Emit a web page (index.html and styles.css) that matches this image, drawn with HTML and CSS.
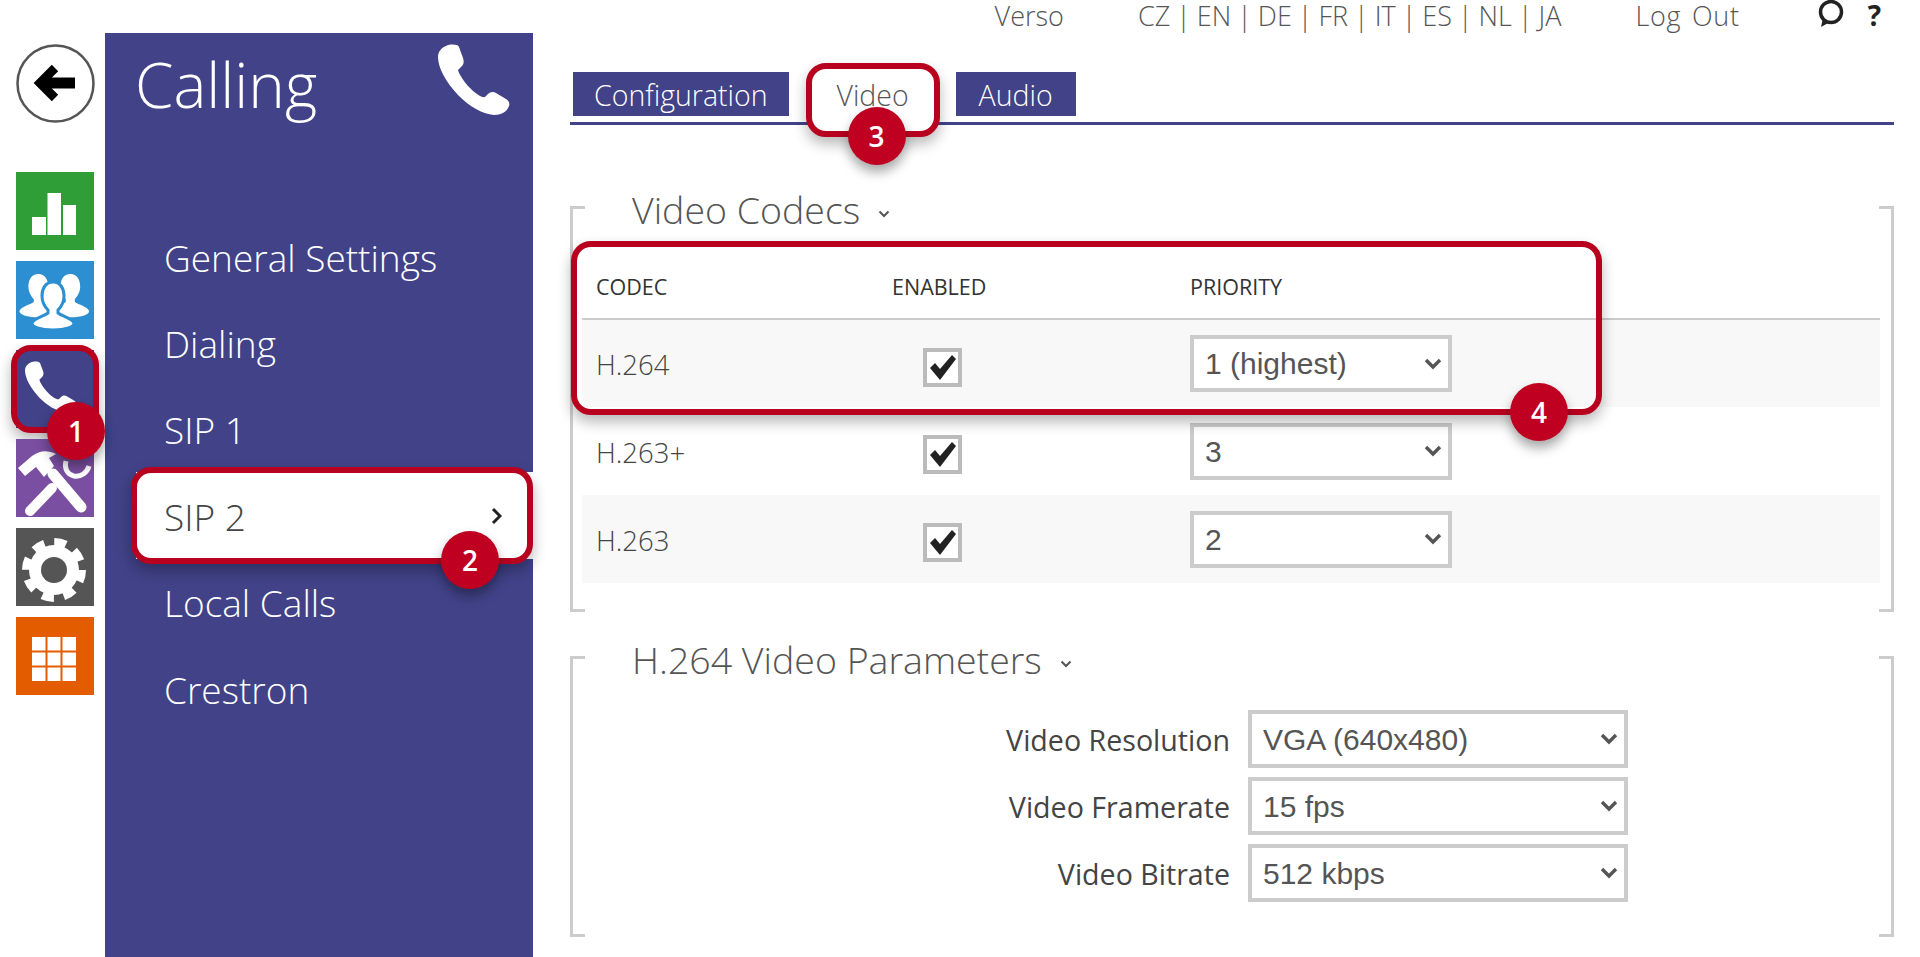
FILE: index.html
```html
<!DOCTYPE html>
<html>
<head>
    <meta charset="UTF-8">
    <title>Calling</title>
    <link rel="stylesheet" href="styles.css">
</head>
<body>
  <div class="page">
    <div class="rail">
      <svg class="back" viewBox="0 0 79 79">
        <circle cx="39.5" cy="39.5" r="38" fill="#fff" stroke="#555" stroke-width="2.5"/>
        <path d="M39 24 L24 39 L39 54" fill="none" stroke="#000" stroke-width="9"/>
        <path d="M28 39 H59" fill="none" stroke="#000" stroke-width="11"/>
      </svg>
      <div class="rail_icons">
        <div class="tile green">
          <svg viewBox="0 0 78 78" fill="#fff">
            <rect x="16" y="45" width="14" height="18"/>
            <rect x="31.5" y="21" width="13.5" height="42"/>
            <rect x="47" y="33" width="13" height="30"/>
          </svg>
        </div>
        <div class="tile blue">
          <svg viewBox="0 0 78 78" fill="#fff">
            <path transform="translate(-11 -5) scale(.9)" d="M37 20 c-7 0 -11 6 -11 14 c0 6 3 11 6 14 l0 3 c-4 3 -14 5 -16 10 c0 4 8 7 21 7 s21 -3 21 -7 c-2 -5 -12 -7 -16 -10 l0 -3 c3 -3 6 -8 6 -14 c0 -8 -4 -14 -11 -14 z"/>
            <path transform="translate(21 -5) scale(.9)" d="M37 20 c-7 0 -11 6 -11 14 c0 6 3 11 6 14 l0 3 c-4 3 -14 5 -16 10 c0 4 8 7 21 7 s21 -3 21 -7 c-2 -5 -12 -7 -16 -10 l0 -3 c3 -3 6 -8 6 -14 c0 -8 -4 -14 -11 -14 z"/>
            <path transform="translate(0 1)" stroke="#2c8fd1" stroke-width="3" d="M37 20 c-7 0 -11 6 -11 14 c0 6 3 11 6 14 l0 3 c-4 3 -14 5 -16 10 c0 4 8 7 21 7 s21 -3 21 -7 c-2 -5 -12 -7 -16 -10 l0 -3 c3 -3 6 -8 6 -14 c0 -8 -4 -14 -11 -14 z"/>
          </svg>
        </div>
        <div class="tile indigo">
          <svg viewBox="0 0 78 78" fill="#fff">
            <path transform="translate(9 11) scale(.72)" d="M8 2 C3 4 0 8 0 13 C0 24 8 38 20 51 C31 62 44 70 56 71 C63 71 69 68 71 62 C72 59 71 57 68 55 L58 49 C55 47 52 48 50 50 L47 53 C44 54 38 50 32 44 C26 38 21 30 20 26 L24 22 C26 20 26 17 25 14 L21 3 C20 0 12 0 8 2 Z"/>
          </svg>
          <div class="callout"></div>
          <div class="badge badge_one">1</div>
        </div>
        <div class="tile violet">
          <svg viewBox="0 0 78 78" fill="none" stroke="#fff">
            <path d="M37 35 L65 68" stroke-width="11" stroke-linecap="round"/>
            <path d="M14 72 L36 49" stroke-width="10" stroke-linecap="round"/>
            <path d="M2 29 L16 17 C24 11 32 11 40 15 L33 19 L38 27 L28 38 L20 28 L9 37 Z" fill="#fff" stroke="none"/>
            <path d="M50 22 C48 30 52 36 58 37 C65 38 71 34 73 27" stroke-width="5"/>
          </svg>
        </div>
        <div class="tile grey">
          <svg viewBox="0 0 78 78">
            <circle cx="38" cy="42" r="25" fill="#fff"/>
            <circle cx="38" cy="42" r="28" fill="none" stroke="#fff" stroke-width="8" stroke-dasharray="12 10"/>
            <circle cx="38" cy="42" r="13" fill="#555"/>
          </svg>
        </div>
        <div class="tile orange">
          <svg viewBox="0 0 78 78">
            <rect x="16" y="20" width="44" height="44" fill="#fff"/>
            <path d="M30.5 20 V64 M45.5 20 V64 M16 34.5 H60 M16 49.5 H60" stroke="#e35d00" stroke-width="2"/>
          </svg>
        </div>
      </div>
    </div>

    <div class="nav">
      <div class="nav_head">
        <div class="nav_title">Calling</div>
        <svg class="nav_phone" viewBox="0 0 72 72" fill="#fff">
          <path d="M8 2 C3 4 0 8 0 13 C0 24 8 38 20 51 C31 62 44 70 56 71 C63 71 69 68 71 62 C72 59 71 57 68 55 L58 49 C55 47 52 48 50 50 L47 53 C44 54 38 50 32 44 C26 38 21 30 20 26 L24 22 C26 20 26 17 25 14 L21 3 C20 0 12 0 8 2 Z"/>
        </svg>
      </div>
      <div class="nav_item">General Settings</div>
      <div class="nav_item">Dialing</div>
      <div class="nav_item">SIP 1</div>
      <div class="nav_item active">
        SIP 2
        <svg class="nav_arrow" viewBox="0 0 11 18"><path d="M2 2 L9 9 L2 16" fill="none" stroke="#222" stroke-width="3"/></svg>
        <div class="callout"></div>
        <div class="badge badge_two">2</div>
      </div>
      <div class="nav_item">Local Calls</div>
      <div class="nav_item">Crestron</div>
    </div>

    <div class="main">
      <div class="topbar">
        <span>Verso</span>
        <span class="langs">CZ | EN | DE | FR | IT | ES | NL | JA</span>
        <span class="logout">Log Out</span>
        <svg class="bubble" viewBox="0 0 26 28"><circle cx="13" cy="12" r="10.5" fill="none" stroke="#222" stroke-width="3.5"/><path d="M5 18 L3 27 L12 22 Z" fill="#222"/></svg>
        <span class="help">?</span>
      </div>

      <div class="tabs">
        <div class="tab">Configuration</div>
        <div class="tab video">
          <div class="callout"></div>
          <span class="tab_text">Video</span>
          <div class="badge badge_three">3</div>
        </div>
        <div class="tab audio">Audio</div>
      </div>

      <div class="section codecs">
        <h2>Video Codecs <svg class="caret" viewBox="0 0 12 8"><path d="M1.5 1.5 L6 6 L10.5 1.5" fill="none" stroke="#555" stroke-width="2"/></svg></h2>
        <table>
          <thead>
            <tr><th class="c1">CODEC</th><th class="c2">ENABLED</th><th class="c3">PRIORITY</th><th></th></tr>
          </thead>
          <tbody>
            <tr class="odd">
              <td class="c1">H.264</td>
              <td class="c2"><input type="checkbox" checked></td>
              <td class="c3"><select><option>1 (highest)</option></select></td>
              <td></td>
            </tr>
            <tr>
              <td class="c1">H.263+</td>
              <td class="c2"><input type="checkbox" checked></td>
              <td class="c3"><select><option>3</option></select></td>
              <td></td>
            </tr>
            <tr class="odd">
              <td class="c1">H.263</td>
              <td class="c2"><input type="checkbox" checked></td>
              <td class="c3"><select><option>2</option></select></td>
              <td></td>
            </tr>
          </tbody>
        </table>
        <div class="callout table_callout">
          <div class="badge badge_four">4</div>
        </div>
      </div>

      <div class="section params">
        <h2>H.264 Video Parameters <svg class="caret" viewBox="0 0 12 8"><path d="M1.5 1.5 L6 6 L10.5 1.5" fill="none" stroke="#555" stroke-width="2"/></svg></h2>
        <div class="param_grid">
          <label>Video Resolution</label>
          <select><option>VGA (640x480)</option></select>
          <label>Video Framerate</label>
          <select><option>15 fps</option></select>
          <label>Video Bitrate</label>
          <select><option>512 kbps</option></select>
        </div>
      </div>
    </div>
  </div>
</body>
</html>
```
FILE: styles.css
```css
* {
  box-sizing: border-box;
}
html, body {
  margin: 0;
  height: 100%;
  background: #fff;
}
body {
  font-family: "Open Sans", "Liberation Sans", sans-serif;
  color: #555;
}
.page {
  display: flex;
  height: 957px;
  overflow: hidden;
}

/* left icons */
.rail {
  width: 105px;
  flex: none;
  padding: 44px 0 0 16px;
}
.back {
  display: block;
  width: 79px;
  height: 79px;
}
.rail_icons {
  display: flex;
  flex-direction: column;
  gap: 11px;
  margin-top: 49px;
}
.tile {
  position: relative;
  width: 78px;
  height: 78px;
}
.tile svg {
  display: block;
  width: 78px;
  height: 78px;
}
.green { background: #2f9e37; }
.blue { background: #2c8fd1; }
.indigo { background: #414288; }
.violet { background: #7a4ea0; }
.grey { background: #555; }
.orange { background: #e35d00; }

/* red marks */
.callout {
  position: absolute;
  top: -5px;
  right: -5px;
  bottom: -5px;
  left: -5px;
  border: 6px solid #b8001f;
  border-radius: 20px;
  box-shadow: 0 7px 14px rgba(0, 0, 0, 0.28);
}
.badge {
  position: absolute;
  width: 58px;
  height: 58px;
  border-radius: 50%;
  background: #bf0021;
  color: #fff;
  font-size: 28px;
  font-weight: 600;
  line-height: 58px;
  text-align: center;
  box-shadow: 0 7px 12px rgba(0, 0, 0, 0.35);
  z-index: 3;
}
.badge_one { left: 31px; top: 52px; }
.badge_two { left: 305px; top: 59px; }
.badge_three { left: 36px; top: 35px; }
.badge_four { left: 933px; top: 136px; }

/* menu */
.nav {
  width: 428px;
  flex: none;
  margin-top: 33px;
  background: #414288;
  color: #fff;
}
.nav_head {
  display: flex;
  justify-content: space-between;
  align-items: flex-start;
  height: 180px;
  padding: 11px 23px 0 30px;
}
.nav_title {
  font-size: 62px;
  font-weight: 300;
  line-height: 80px;
}
.nav_phone {
  width: 72px;
  height: 72px;
}
.nav_item {
  position: relative;
  display: flex;
  justify-content: space-between;
  align-items: center;
  height: 86.4px;
  margin-left: 31px;
  padding: 2px 31px 0 28px;
  font-size: 37px;
  font-weight: 300;
}
.nav_item.active {
  z-index: 2;
  background: #fff;
  color: #444;
}
.nav_item .callout {
  right: 0;
}
.nav_arrow {
  width: 11px;
  height: 18px;
}

/* content */
.main {
  flex: 1;
  min-width: 0;
  padding: 0 26px 0 37px;
}
.topbar {
  display: flex;
  justify-content: flex-end;
  align-items: flex-start;
  height: 72px;
  padding-right: 13px;
  font-size: 27px;
  font-weight: 300;
  line-height: 32px;
  white-space: nowrap;
}
.langs {
  margin-left: 74px;
  word-spacing: -1px;
}
.logout {
  margin-left: 74px;
  letter-spacing: 0.7px;
  word-spacing: 3px;
}
.bubble {
  width: 26px;
  height: 28px;
  margin-left: 78px;
}
.help {
  margin-left: 24px;
  color: #222;
  font-size: 28px;
  font-weight: 700;
  line-height: 30px;
}

.tabs {
  display: flex;
  height: 53px;
  padding-left: 3px;
  border-bottom: 3px solid #414288;
}
.tab {
  height: 44px;
  padding: 0 21px;
  background: #414288;
  color: #fff;
  font-size: 28.5px;
  font-weight: 300;
  line-height: 46px;
}
.audio {
  width: 120px;
  padding: 0;
  text-align: center;
}
.video {
  position: relative;
  width: 122px;
  margin: 0 22px 0 23px;
  padding: 0;
  background: none;
  color: #555;
  text-align: center;
}
.video .callout {
  top: -9px;
  right: -6px;
  bottom: -21px;
  left: -6px;
  background: #fff;
}
.tab_text {
  position: relative;
}

.section {
  position: relative;
  display: flow-root;
}
.section::before,
.section::after {
  content: "";
  position: absolute;
  top: 0;
  bottom: 0;
  width: 12px;
  border: 3px solid #ccc;
}
.section::before {
  left: 0;
  border-right: none;
}
.section::after {
  right: 0;
  border-left: none;
}
.codecs {
  margin-top: 81px;
  padding-bottom: 29px;
}
.params {
  margin-top: 44px;
  padding-bottom: 35px;
}
h2 {
  margin: -20px 0 21px 62px;
  color: #555;
  font-size: 37.5px;
  font-weight: 300;
  line-height: 48px;
}
.caret {
  width: 12px;
  height: 8px;
  margin: 0 0 6px 8px;
}

table {
  width: 1298px;
  margin: 0 12px;
  border-collapse: collapse;
  table-layout: fixed;
}
.c1 { width: 296px; padding-left: 14px; }
.c2 { width: 311px; }
.c3 { width: 400px; }
th {
  height: 64px;
  border-bottom: 2px solid #ccc;
  color: #333;
  font-size: 21.5px;
  font-weight: 400;
  text-align: left;
}
th.c2 {
  padding-left: 14px;
}
td {
  height: 88px;
  padding: 0;
  color: #444;
  font-size: 27.5px;
  font-weight: 300;
}
td.c1 {
  padding-top: 2px;
}
td.c2 {
  padding-left: 45px;
}
td select {
  margin-left: 1px;
}
.odd {
  background: #f8f8f8;
}
.table_callout {
  top: 35px;
  right: auto;
  bottom: auto;
  left: 1px;
  width: 1031px;
  height: 174px;
}

input[type="checkbox"] {
  display: block;
  width: 39px;
  height: 39px;
  margin: 7px 0 0;
  appearance: none;
  border: 4px solid #bbb;
  background: #fff url("data:image/svg+xml,%3Csvg xmlns='http://www.w3.org/2000/svg' viewBox='0 0 31 31'%3E%3Cpath d='M3 16 L8 11 L13 17 L25 3 L29 7 L13 28 Z' fill='%23222'/%3E%3C/svg%3E") center no-repeat;
}
select {
  display: block;
  width: 262px;
  height: 57px;
  padding: 0 0 0 11px;
  appearance: none;
  border: 4px solid #ccc;
  border-radius: 0;
  background: #fff url("data:image/svg+xml,%3Csvg xmlns='http://www.w3.org/2000/svg' viewBox='0 0 18 12'%3E%3Cpath d='M2 2 L9 9 L16 2' fill='none' stroke='%23555' stroke-width='3.4'/%3E%3C/svg%3E") right 6px center / 18px 12px no-repeat;
  color: #555;
  font-family: "Liberation Sans", sans-serif;
  font-size: 30px;
}

.param_grid {
  display: grid;
  grid-template-columns: 660px 380px;
  column-gap: 18px;
  row-gap: 9px;
  align-items: center;
  margin-top: 26px;
}
.params h2 {
  margin-bottom: 0;
}
.param_grid label {
  color: #444;
  font-size: 28.6px;
  text-align: right;
}
.param_grid select {
  width: 380px;
  height: 58px;
}
```
